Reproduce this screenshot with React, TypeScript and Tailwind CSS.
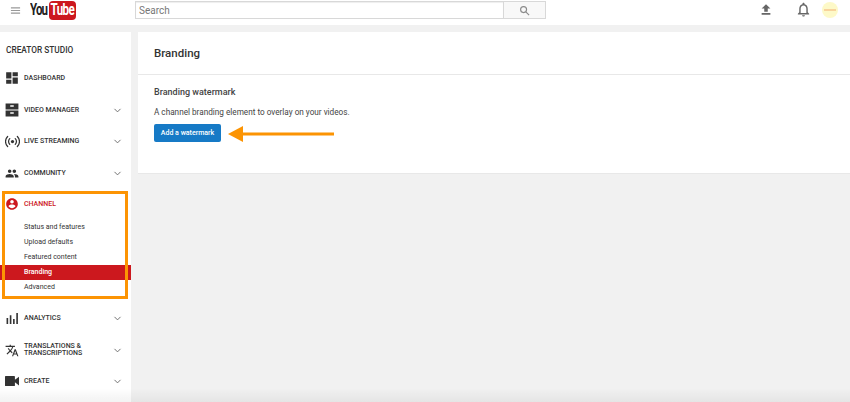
import { ChevronDown } from "lucide-react";
import type { ReactNode } from "react";

function Mi({ d, className = "w-[14px] h-[14px]" }: { d: string; className?: string }) {
  return (
    <svg viewBox="0 0 24 24" className={className} fill="currentColor">
      <path d={d} />
    </svg>
  );
}

const icons = {
  dashboard: "M2 13h9V2H2v11zm0 9h9v-7H2v7zm11 0h9V11h-9v11zm0-20v7h9V2h-9z",
  manager: "M1 1h22v10H1V1zm8 3v2.5h6V4H9zM1 13h22v10H1V13zm8 3v2.5h6V16H9z",
  community:
    "M16 11c1.66 0 2.99-1.34 2.99-3S17.66 5 16 5c-1.66 0-3 1.34-3 3s1.34 3 3 3zm-8 0c1.66 0 2.99-1.34 2.99-3S9.66 5 8 5C6.34 5 5 6.34 5 8s1.34 3 3 3zm0 2c-2.33 0-7 1.17-7 3.5V19h14v-2.5c0-2.33-4.67-3.5-7-3.5zm8 0c-.29 0-.62.02-.97.05 1.16.84 1.97 1.97 1.97 3.45V19h6v-2.5c0-2.33-4.67-3.5-7-3.5z",
  channel:
    "M12 2C6.48 2 2 6.48 2 12s4.48 10 10 10 10-4.48 10-10S17.52 2 12 2zm0 3c1.66 0 3 1.34 3 3s-1.34 3-3 3-3-1.34-3-3 1.34-3 3-3zm0 14.2c-2.5 0-4.71-1.28-6-3.22.03-1.99 4-3.08 6-3.08 1.99 0 5.97 1.09 6 3.08-1.29 1.94-3.5 3.22-6 3.22z",
  analytics: "M1 11h3v11H1V11zm6-5h3v16H7V6zm6 7h3v9h-3v-9zm6-11h3v20h-3V2z",
  translate:
    "M12.87 15.07l-2.54-2.51.03-.03c1.74-1.94 2.98-4.17 3.71-6.53H17V4h-7V2H8v2H1v1.99h11.17C11.5 7.92 10.44 9.75 9 11.35 8.07 10.32 7.3 9.19 6.69 8h-2c.73 1.63 1.73 3.17 2.98 4.56l-5.09 5.02L4 19l5-5 3.11 3.11.76-2.04zM18.5 10h-2L12 22h2l1.12-3h4.75L21 22h2l-4.5-12zm-2.62 7l1.62-4.33L19.12 17h-3.24z",
  create: "M17 10V4.5c0-.55-.45-1-1-1H1c-.55 0-1 .45-1 1v15c0 .55.45 1 1 1h15c.55 0 1-.45 1-1V14l7 5.5v-15L17 10z",
};

function LiveIcon() {
  return (
    <svg viewBox="0 0 24 24" className="w-[15px] h-[15px] shrink-0" fill="none" stroke="currentColor" strokeWidth="2" strokeLinecap="round">
      <circle cx="12" cy="12" r="2.6" fill="currentColor" stroke="none" />
      <path d="M7.6 7.4a6.5 6.5 0 0 0 0 9.2M16.4 7.4a6.5 6.5 0 0 1 0 9.2M4.2 4a11.2 11.2 0 0 0 0 16M19.8 4a11.2 11.2 0 0 1 0 16" />
    </svg>
  );
}

function NavRow({
  icon,
  label,
  chevron = true,
  red = false,
  className = "",
}: {
  icon: ReactNode;
  label: ReactNode;
  chevron?: boolean;
  red?: boolean;
  className?: string;
}) {
  return (
    <div className={`flex items-center pl-[5px] pr-[8px] ${red ? "text-[#cc181e]" : "text-[#333333]"} ${className}`}>
      <span className="w-[14px] shrink-0 flex justify-center">{icon}</span>
      <span className="ml-[5px] flex-1 text-[7px] leading-[7px] font-medium uppercase">{label}</span>
      {chevron && <ChevronDown className="w-[11px] h-[11px] text-[#666666]" strokeWidth={2} />}
    </div>
  );
}

function SubItem({ label, active = false }: { label: string; active?: boolean }) {
  return (
    <div
      className={`h-[15px] pl-[24px] flex items-center text-[7px] ${
        active ? "bg-[#cc181e] text-white font-medium" : "text-[#333333]"
      }`}
    >
      {label}
    </div>
  );
}

export default function App() {
  return (
    <div className="relative w-[850px] h-[402px] overflow-hidden bg-[#f1f1f1] font-['Roboto',sans-serif]">
      <header className="h-[25px] bg-white flex items-start pt-[1px]">
        <svg viewBox="0 0 24 24" className="ml-[10px] mt-[4px] w-[11px] h-[11px] text-[#999999]" fill="currentColor">
          <path d="M2 5h20v2.4H2zM2 10.8h20v2.4H2zM2 16.6h20V19H2z" />
        </svg>
        <div className="ml-[9px] flex items-center h-[18px] w-[46px]">
          <span className="w-[19px] text-[16px] font-bold tracking-[-1.2px] text-[#222222] scale-x-[0.72] origin-left whitespace-nowrap">You</span>
          <span className="h-[19px] w-[27px] rounded-[4px] bg-[#cc181e] text-white flex items-center justify-center overflow-hidden">
            <span className="text-[16px] font-bold tracking-[-0.8px] scale-x-[0.72] whitespace-nowrap">Tube</span>
          </span>
        </div>
        <div className="ml-[59px] flex h-[18px]">
          <div className="w-[369px] bg-white border border-[#d8d8d8] shadow-[inset_0_1px_1px_#eeeeee] flex items-center pl-[3px] text-[10px] text-[#777777]">
            Search
          </div>
          <div className="w-[42px] bg-[#f8f8f8] border border-l-0 border-[#d8d8d8] flex items-center justify-center text-[#8a8a8a]">
            <svg viewBox="0 0 24 24" className="w-[11px] h-[11px]" fill="none" stroke="currentColor" strokeWidth="2.5">
              <circle cx="10" cy="10" r="6.5" />
              <path d="M15 15l7 7" />
            </svg>
          </div>
        </div>
        <div className="ml-auto flex items-center">
          <Mi d="M9 15h6V9.5h4.5L12 2 4.5 9.5H9zM4.5 17h15v3h-15z" className="w-[14px] h-[14px] text-[#666666]" />
          <Mi
            d="M12 22c1.1 0 2-.9 2-2h-4c0 1.1.9 2 2 2zm6-6v-5c0-3.07-1.63-5.64-4.5-6.32V4c0-.83-.67-1.5-1.5-1.5s-1.5.67-1.5 1.5v.68C7.64 5.36 6 7.92 6 11v5l-2 2v1h16v-1l-2-2zm-2 1H8v-6c0-2.48 1.51-4.5 4-4.5s4 2.02 4 4.5v6z"
            className="ml-[22px] w-[17px] h-[17px] text-[#666666]"
          />
          <div className="ml-[10px] mr-[12px] w-[16px] h-[16px] rounded-full bg-[#fdf9c8] flex items-center justify-center">
            <div className="w-[12px] h-[2px] bg-[#f8d39c]" />
          </div>
        </div>
      </header>

      <div className="flex mt-[7px] gap-[7px] items-start">
        <aside className="w-[131px] h-[370px] bg-white shrink-0">
          <div className="pt-[13px] pl-[6px] h-[38px] text-[8.3px] font-medium text-[#333333] uppercase leading-[10px]">Creator Studio</div>
          <NavRow className="h-[16px]" chevron={false} icon={<Mi d={icons.dashboard} className="w-[14px] h-[14px]" />} label="Dashboard" />
          <NavRow className="h-[16px] mt-[16px]" icon={<Mi d={icons.manager} className="w-[14px] h-[14px]" />} label="Video Manager" />
          <NavRow className="h-[16px] mt-[15px]" icon={<LiveIcon />} label="Live Streaming" />
          <NavRow className="h-[16px] mt-[16px]" icon={<Mi d={icons.community} className="w-[15px] h-[15px]" />} label="Community" />
          <NavRow className="h-[16px] mt-[15px]" red chevron={false} icon={<Mi d={icons.channel} className="w-[16px] h-[16px]" />} label="Channel" />
          <div className="mt-[8px]">
            <SubItem label="Status and features" />
            <SubItem label="Upload defaults" />
            <SubItem label="Featured content" />
            <SubItem label="Branding" active />
            <SubItem label="Advanced" />
          </div>
          <NavRow className="h-[16px] mt-[15px]" icon={<Mi d={icons.analytics} className="w-[13px] h-[13px]" />} label="Analytics" />
          <NavRow
            className="h-[16px] mt-[16px]"
            icon={<Mi d={icons.translate} className="w-[15px] h-[15px]" />}
            label={
              <>
                Translations &amp;
                <br />
                Transcriptions
              </>
            }
          />
          <NavRow className="h-[16px] mt-[15px]" icon={<Mi d={icons.create} className="w-[14px] h-[14px]" />} label="Create" />
        </aside>

        <main className="flex-1 bg-white border-b border-[#e8e8e8] h-[142px]">
          <div className="h-[43px] pl-[16px] pt-[13px] border-b border-[#e8e8e8] text-[11.5px] leading-[16px] font-medium text-[#333333]">Branding</div>
          <div className="pl-[16px] pt-[11px]">
            <div className="text-[9px] leading-[12px] font-medium text-[#444444]">Branding watermark</div>
            <div className="mt-[8px] text-[8.2px] leading-[12px] text-[#444444]">A channel branding element to overlay on your videos.</div>
            <div className="mt-[6px] flex items-start">
              <button type="button" className="w-[67px] h-[18px] rounded-[2px] bg-[#167ac6] text-white text-[7px] font-medium">
                Add a watermark
              </button>
              <svg viewBox="0 0 106 16" className="ml-[7px] mt-[2px] w-[106px] h-[16px]">
                <path d="M0 8L15 0V6.5H106V9.5H15V16z" fill="#fc9403" />
              </svg>
            </div>
          </div>
        </main>
      </div>

      <div className="absolute left-[2px] top-[191px] w-[126px] h-[108px] border-[3px] border-[#fc9403] pointer-events-none" />
      <div className="absolute left-0 bottom-0 w-full h-[14px] bg-gradient-to-b from-transparent to-black/5 pointer-events-none" />
    </div>
  );
}
